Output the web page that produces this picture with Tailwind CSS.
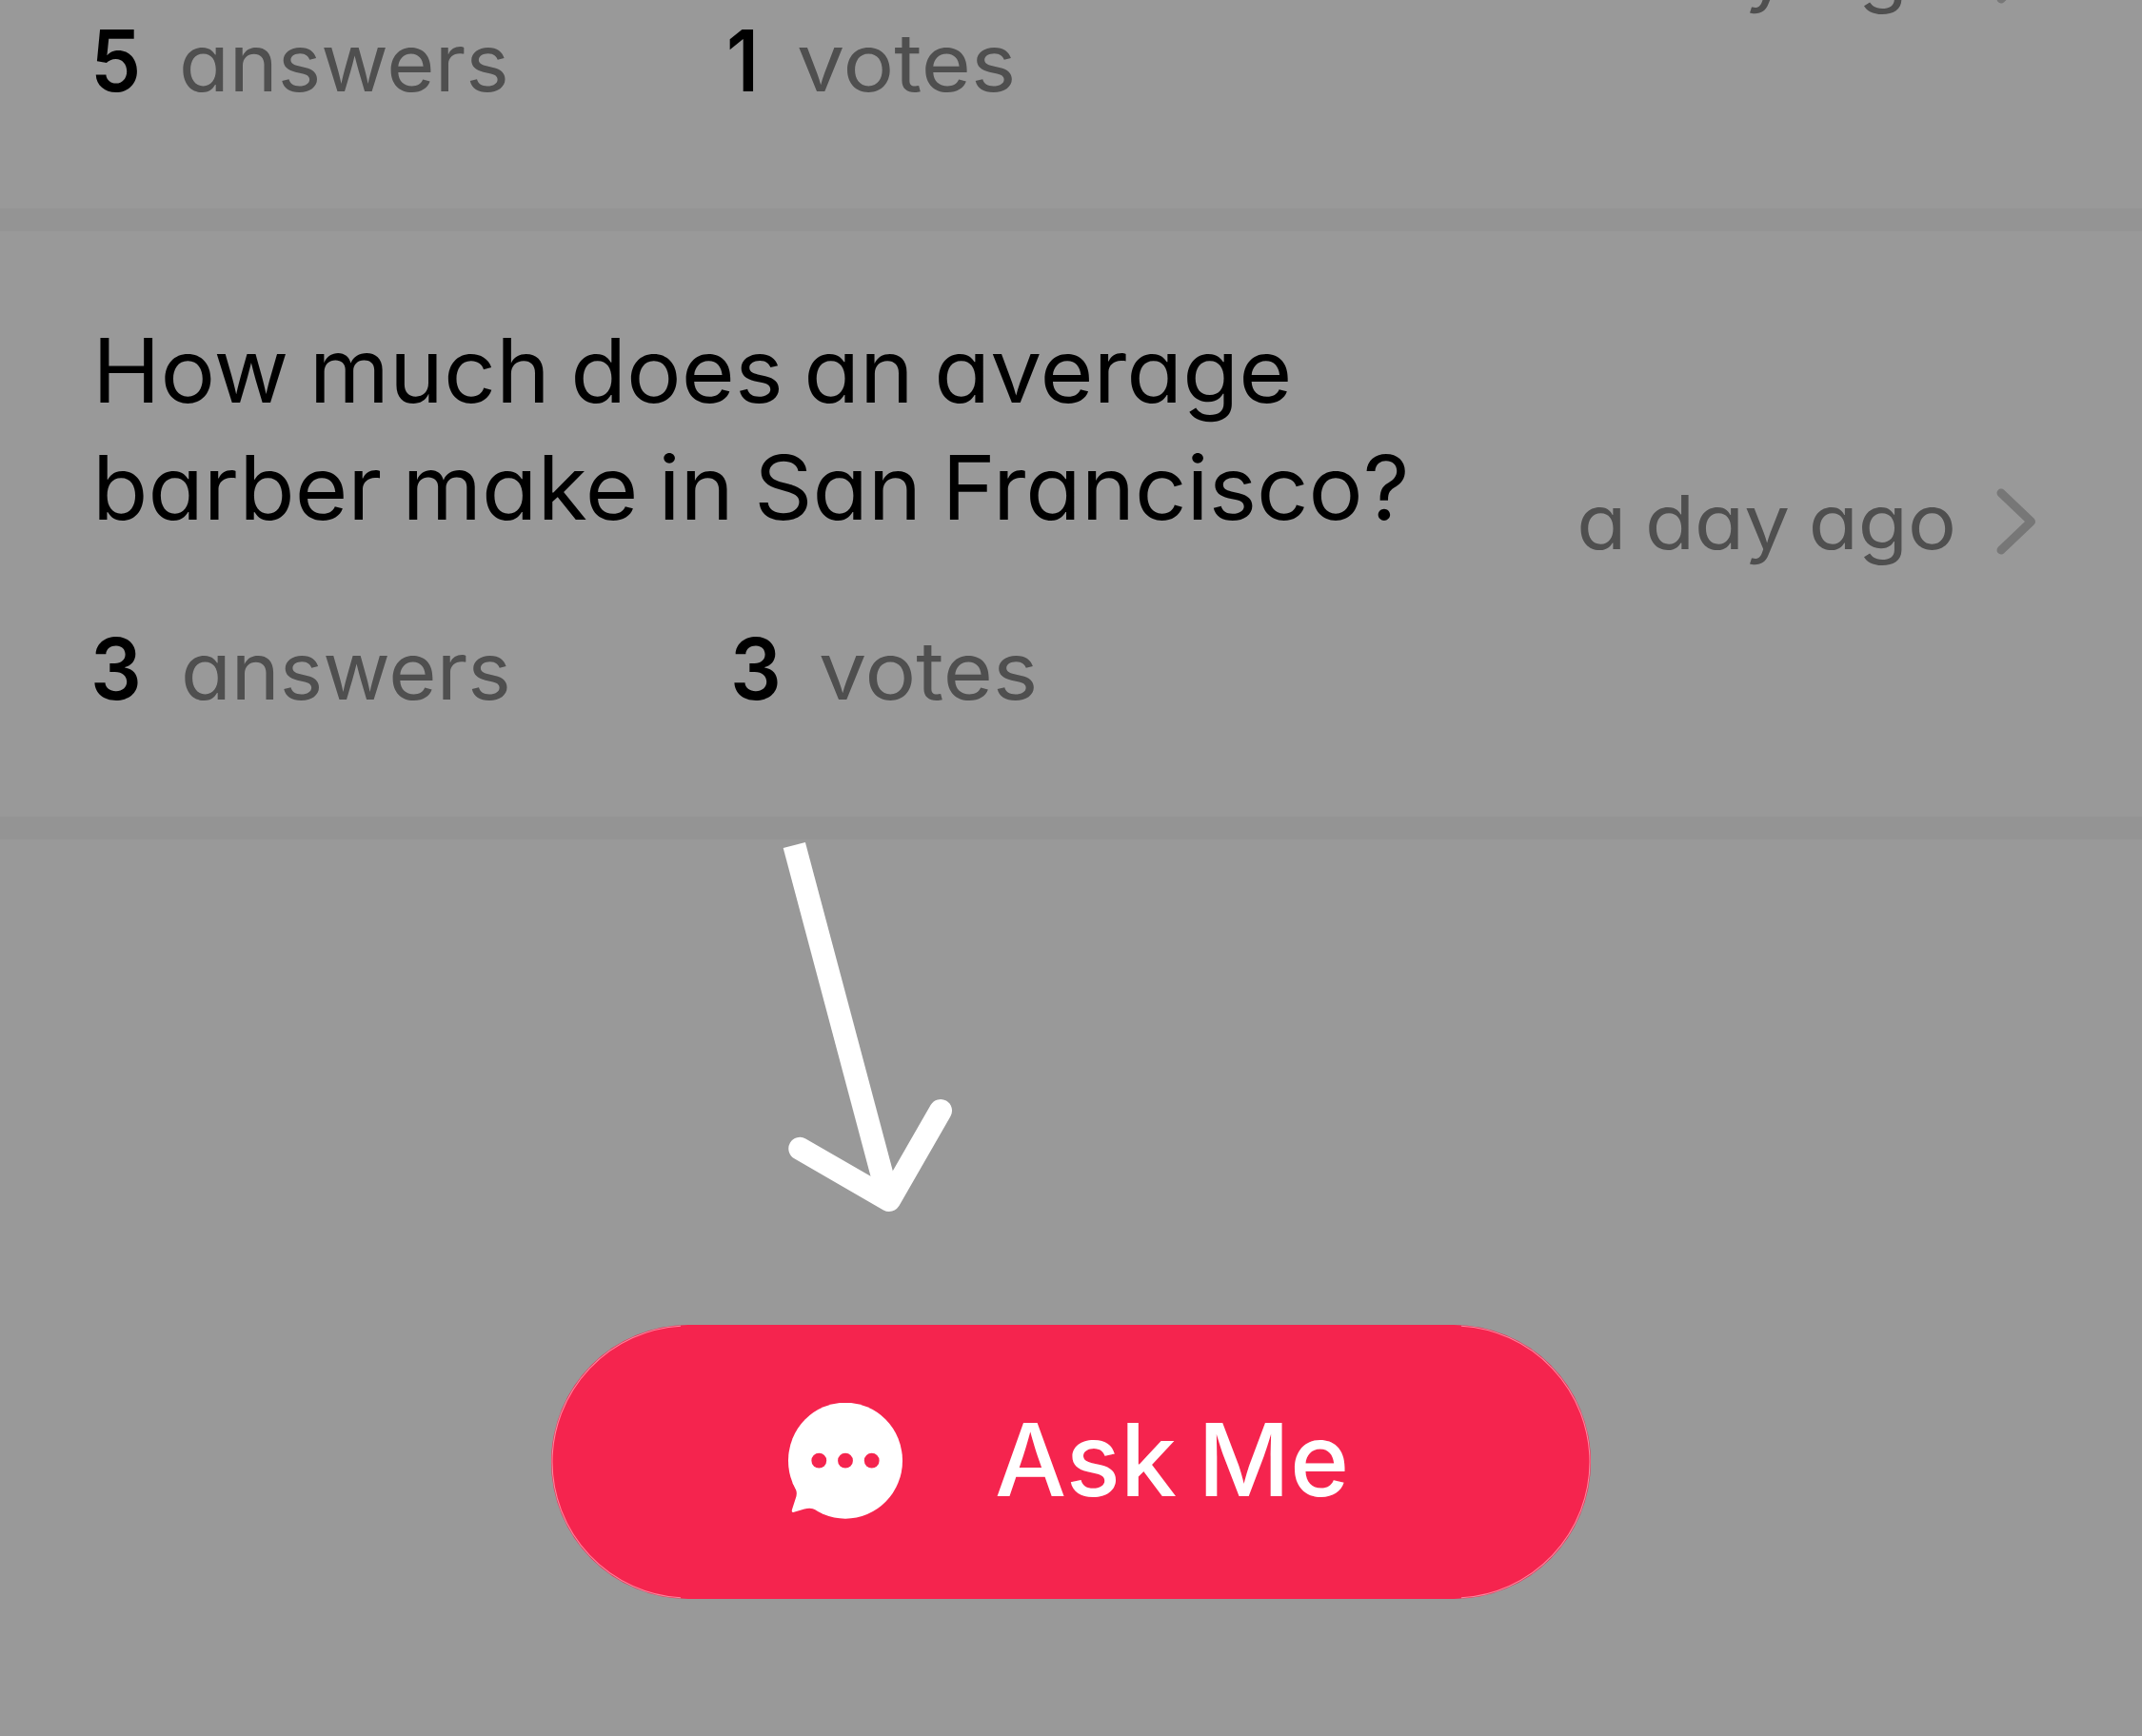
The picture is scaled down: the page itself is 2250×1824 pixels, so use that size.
<!DOCTYPE html>
<html lang="en">
<head>
<meta charset="utf-8">
<title>Questions</title>
<script src="https://cdn.jsdelivr.net/npm/@tailwindcss/browser@4"></script>
</head>
<body class="w-[2250px] h-[1824px] overflow-hidden bg-[#999999] font-['Inter',sans-serif] [font-feature-settings:'cv11']">
<main class="relative flex h-[1824px] flex-col overflow-hidden">
  <article class="-mt-[273px] flex h-[492px] shrink-0 pl-[95px] pr-[111px] pt-[85px]">
    <div class="flex-1">
      <div class="h-[123px]"></div>
      <div class="mt-[74px] flex items-baseline text-[84px] leading-[110px] text-[#4f4f4f]">
        <b class="w-[93px] origin-left scale-x-[0.95] text-[89px] font-semibold text-black">5</b>
        <span class="w-[575px] origin-left scale-x-[1.027]">answers</span>
        <b class="w-[74px] origin-left scale-x-[0.9] text-[89px] font-semibold text-black">1</b>
        <span class="origin-left scale-x-[1.066]">votes</span>
      </div>
    </div>
    <div class="-mt-[85px] flex items-center gap-[42px] pb-[9px] text-[79px] leading-[100px] text-[#4f4f4f]">
      <span class="origin-right scale-x-[1.078] [word-spacing:-4px]">a day ago</span>
      <svg class="h-[70px] w-[42px]" viewBox="0 0 42 70" fill="none" stroke="#777" stroke-width="9" stroke-linecap="round" stroke-linejoin="round"><path d="M5 5 36.500 35 5 65"/></svg>
    </div>
  </article>
  <div class="h-6 shrink-0 bg-[#949494]"></div>
  <article class="flex h-[615px] shrink-0 pl-[95px] pr-[111px] pt-[85px]">
    <div class="flex-1">
      <h2 class="ml-[2px] text-[93px] leading-[123px] text-black whitespace-nowrap"><span class="block w-fit origin-left scale-x-[1.035] [word-spacing:-5.5px]">How much does an average</span><span class="block w-fit origin-left scale-x-[1.026] [word-spacing:-5.5px]">barber make in San Francisco?</span></h2>
      <div class="mt-[74px] flex items-baseline text-[84px] leading-[110px] text-[#4f4f4f]">
        <b class="w-[95px] origin-left scale-x-[0.95] text-[89px] font-semibold text-black">3</b>
        <span class="w-[577px] origin-left scale-x-[1.027]">answers</span>
        <b class="w-[93px] origin-left scale-x-[0.95] text-[89px] font-semibold text-black">3</b>
        <span class="origin-left scale-x-[1.066]">votes</span>
      </div>
    </div>
    <div class="-mt-[85px] flex items-center gap-[42px] pb-[6px] text-[79px] leading-[100px] text-[#4f4f4f]">
      <span class="origin-right scale-x-[1.078] [word-spacing:-4px]">a day ago</span>
      <svg class="h-[70px] w-[42px]" viewBox="0 0 42 70" fill="none" stroke="#777" stroke-width="9" stroke-linecap="round" stroke-linejoin="round"><path d="M5 5 36.500 35 5 65"/></svg>
    </div>
  </article>
  <div class="h-6 shrink-0 bg-[#949494]"></div>
  <button class="relative mt-[510px] ml-[579px] flex h-[288px] w-[1092px] shrink-0 items-center rounded-full bg-[#f5244e] pl-[248px] text-[106px] font-medium text-white">
    <!-- highlight along the rounded ends -->
    <svg class="absolute inset-0 h-[288px] w-[1092px]" viewBox="0 0 1092 288" fill="none"><path stroke="#fff" stroke-opacity=".45" stroke-width="1.100" d="M136 1.200A143.500 143.500 0 0 0 1 144 143.500 143.500 0 0 0 136 286.800M956 1.200A143.500 143.500 0 0 1 1091 144 143.500 143.500 0 0 1 956 286.800"/></svg>
    <svg class="h-[124px] w-[122px]" viewBox="827 1474 122 124"><g fill="#fff"><ellipse cx="888" cy="1534.700" rx="60" ry="61"/><path d="M832.500 1558Q838 1566 836.500 1572L832 1586Q831 1589.500 834 1588.800L845 1585.500Q855 1582.500 865 1591L880 1540Z"/></g><g fill="#f5244e"><circle cx="860.300" cy="1534.700" r="7.900"/><circle cx="888" cy="1534.700" r="7.900"/><circle cx="915.700" cy="1534.700" r="7.900"/></g></svg>
    <span class="ml-[96px] -mt-1.5 [word-spacing:-6px]">Ask Me</span>
  </button>
  <!-- hint arrow pointing at the button -->
  <svg class="absolute left-[780px] top-[840px] h-[460px] w-[260px]" viewBox="780 840 260 460" fill="none" stroke="#fff" stroke-width="24" stroke-linejoin="round"><path d="M834.300 888 932 1255"/><path stroke-linecap="round" d="M840.300 1206.800 934 1261 988 1167"/></svg>
</main>
</body>
</html>
